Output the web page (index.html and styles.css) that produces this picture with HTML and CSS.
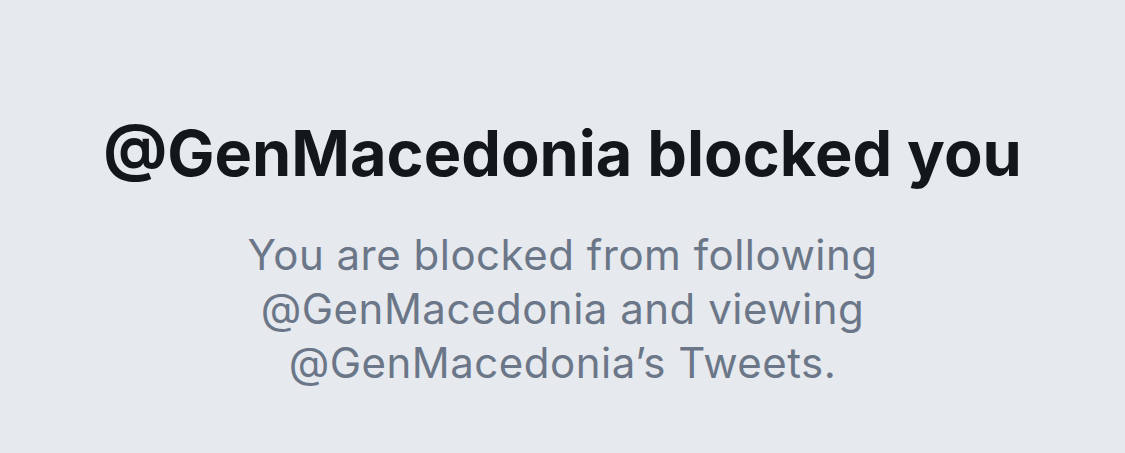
FILE: index.html
```html
<!DOCTYPE html>
<html>
<head>
<meta charset="utf-8">
<link rel="stylesheet" href="styles.css">
</head>
<body>
<main class="page">
  <h1 class="title">@GenMacedonia blocked you</h1>
  <p class="desc">You are blocked from following @GenMacedonia and viewing @GenMacedonia’s Tweets.</p>
</main>
</body>
</html>
```
FILE: styles.css
```css
html, body {
  margin: 0;
  padding: 0;
  background: #e6e9ee;
}
.page {
  width: 1125px;
  height: 453px;
  box-sizing: border-box;
  padding-top: 114px;
  display: flex;
  flex-direction: column;
  align-items: center;
  font-family: Inter, "Noto Sans", sans-serif;
  text-align: center;
}
.title {
  margin: 0;
  font-size: 63px;
  font-weight: 700;
  letter-spacing: 0;
  line-height: 78px;
  color: #14171a;
  white-space: nowrap;
}
.desc {
  margin: 36px 0 0;
  max-width: 700px;
  font-size: 42px;
  font-weight: 400;
  letter-spacing: 0.5px;
  line-height: 54px;
  color: #6b7788;
}
```
